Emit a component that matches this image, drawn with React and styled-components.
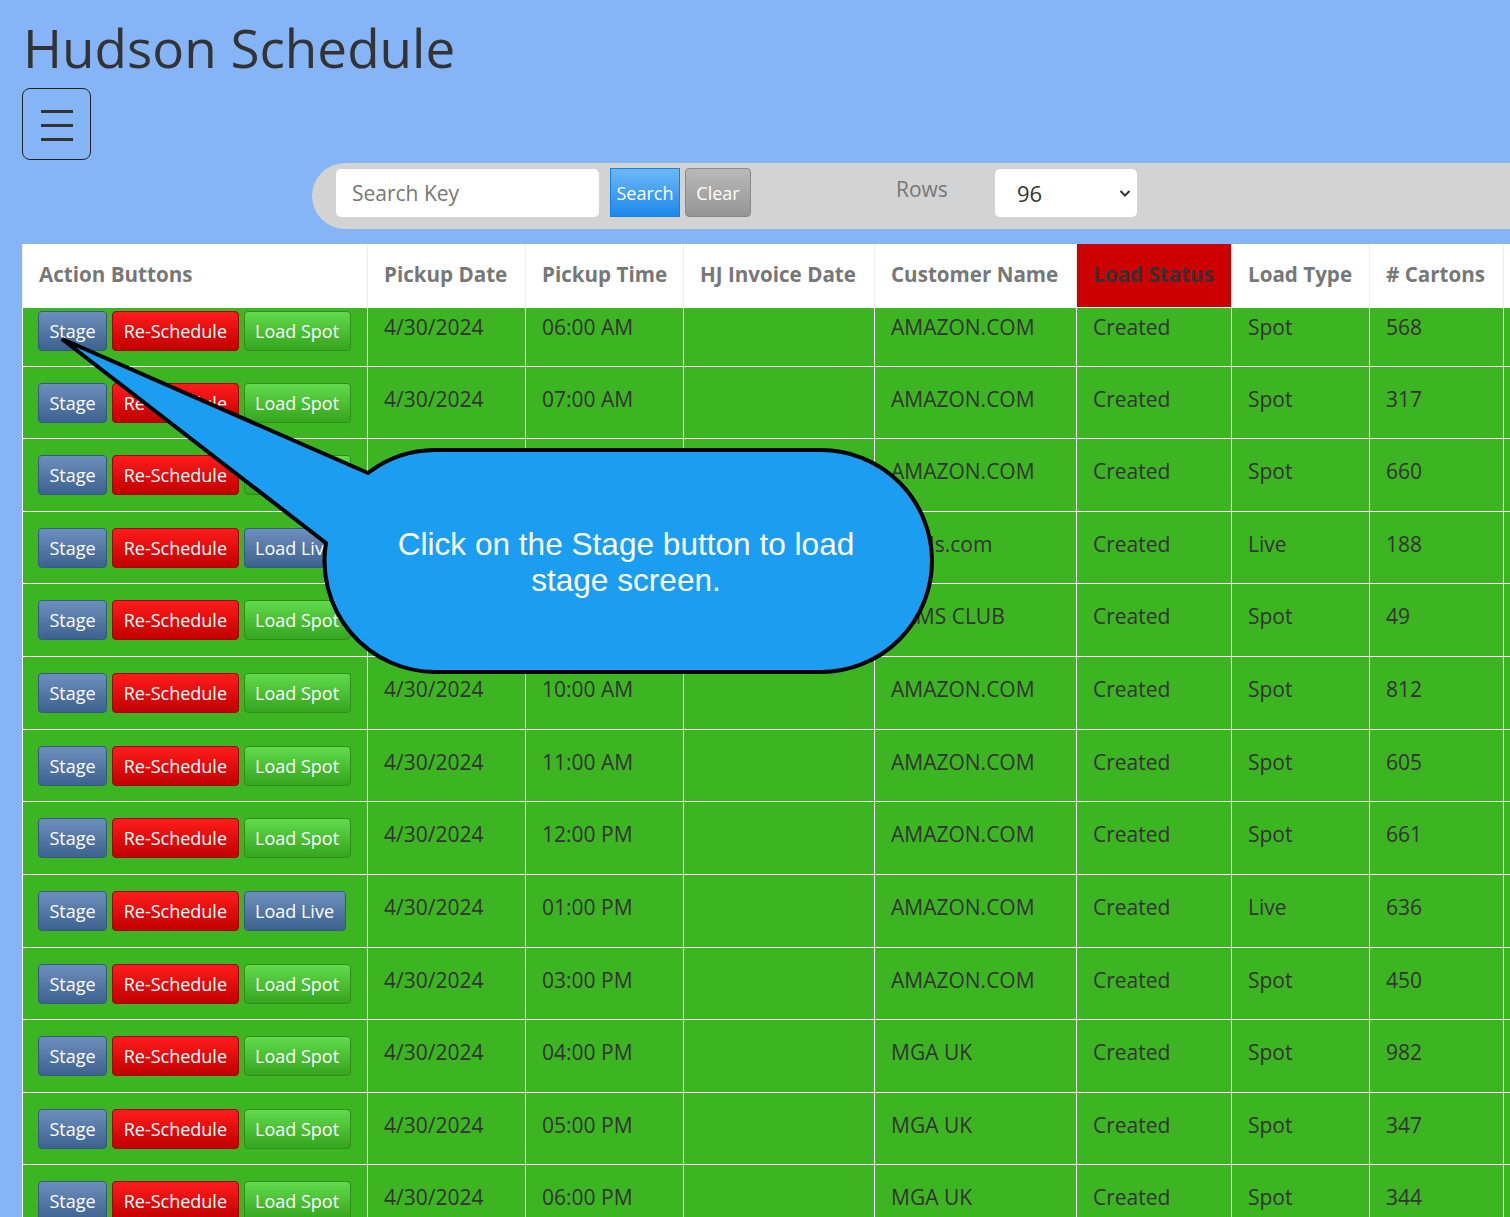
import React from 'react';
import styled, {createGlobalStyle, css} from 'styled-components';

const GlobalStyle = createGlobalStyle`
  html, body {
    margin: 0;
    padding: 0;
    overflow: hidden;
    background: #85b5f6;
  }
  body {
    font-family: "Open Sans", "Liberation Sans", sans-serif;
    color: #333;
  }
  * { box-sizing: border-box; }
`;

const Page = styled.div`
  position: relative;
  width: 1510px;
  height: 1217px;
  overflow: hidden;
  padding-left: 22px;
`;

const Title = styled.h1`
  margin: 17px 0 9px 1px;
  font-size: 53px;
  font-weight: 400;
  line-height: 62px;
  color: #333;
`;

const MenuButton = styled.button`
  display: flex;
  flex-direction: column;
  justify-content: center;
  align-items: center;
  gap: 11px;
  width: 69px;
  height: 72px;
  padding: 3px 0 0;
  background: transparent;
  border: 1px solid #222;
  border-radius: 8px;
`;

const MenuBar = styled.span`
  display: block;
  width: 32px;
  height: 3px;
  background: #333;
`;

const Toolbar = styled.div`
  display: flex;
  align-items: flex-start;
  height: 66px;
  margin: 3px 0 15px 290px;
  padding: 6px 0 0 24px;
  background: #d3d3d3;
  border-radius: 34px 0 0 34px;
`;

const SearchInput = styled.input`
  width: 263px;
  height: 48px;
  padding: 0 16px;
  border: none;
  border-radius: 5px;
  background: #fff;
  font-family: inherit;
  font-size: 21px;
  color: #333;
  outline: none;
  &::placeholder { color: #777; }
`;

const barButtons = {
  search: css`
    width: 70px;
    border-radius: 0;
    background: linear-gradient(#6cb8f7, #1d88ec);
    border-color: #1a7fd9;
  `,
  clear: css`
    width: 66px;
    border-radius: 4px;
    background: linear-gradient(#b9b9b9, #959595);
    border-color: #8a8a8a;
  `,
};

const BarButton = styled.button`
  height: 49px;
  margin: -1px 0 0 ${({$gap}) => $gap}px;
  padding: 0;
  border: 1px solid;
  font-family: inherit;
  font-size: 18px;
  color: #fff;
  ${({$variant}) => barButtons[$variant]}
`;

const RowsLabel = styled.span`
  margin-left: 145px;
  line-height: 40px;
  font-size: 21px;
  color: #777;
`;

const SelectBox = styled.div`
  display: flex;
  align-items: center;
  justify-content: space-between;
  width: 142px;
  height: 48px;
  margin-left: 47px;
  padding: 0 5px 0 22px;
  background: #fff;
  border-radius: 5px;
  font-size: 22px;
  color: #333;
`;

const Table = styled.table`
  border-collapse: collapse;
  table-layout: fixed;
  width: 1632px;
`;

const HeadCell = styled.th`
  height: 63px;
  padding: 0 16px 2px;
  text-align: left;
  vertical-align: middle;
  white-space: nowrap;
  font-size: 20.6px;
  font-weight: 700;
  color: ${({$alert}) => ($alert ? '#333' : '#777')};
  background: ${({$alert}) => ($alert ? '#cc0000' : '#fff')};
  border-left: 1px solid #eee;
`;

const Row = styled.tr`
  height: ${({$first}) => ($first ? '59px' : '72.64px')};
`;

const Cell = styled.td`
  padding: ${({$first}) => ($first ? '4px' : '17px')} 16px 0;
  vertical-align: top;
  white-space: nowrap;
  font-size: 21px;
  line-height: 30px;
  color: #333;
  background: #3db522;
  border: 1px solid #fff;
`;

const ActionCell = styled(Cell)`
  padding: ${({$first}) => ($first ? '3px' : '16px')} 10px 0 15px;
`;

const ButtonGroup = styled.div`
  display: flex;
  gap: 5px;
`;

const actionVariants = {
  blue: css`
    background: linear-gradient(#6d8fbd, #3d6290);
    border-color: #355987;
  `,
  red: css`
    background: linear-gradient(#ff1c1c, #c10000);
    border-color: #a30000;
  `,
  green: css`
    background: linear-gradient(#62da4c, #35a51f);
    border-color: #2e9019;
  `,
};

const ActionButton = styled.button`
  padding: 6px 10.5px;
  border: 1px solid;
  border-radius: 4px;
  font-family: inherit;
  font-size: 18px;
  line-height: 26px;
  color: #fff;
  white-space: nowrap;
  ${({$variant}) => actionVariants[$variant]}
`;

const Overlay = styled.svg`
  position: absolute;
  top: 0;
  left: 0;
  pointer-events: none;
`;

const CalloutText = styled.div`
  position: absolute;
  top: 526px;
  left: 322px;
  width: 608px;
  text-align: center;
  font-family: "Liberation Sans", Arial, sans-serif;
  font-size: 31.6px;
  line-height: 36px;
  color: #fff;
  pointer-events: none;
`;

const columns = [
  {label: 'Action Buttons', width: 345},
  {label: 'Pickup Date', width: 158},
  {label: 'Pickup Time', width: 158},
  {label: 'HJ Invoice Date', width: 191},
  {label: 'Customer Name', width: 202},
  {label: 'Load Status', width: 155, alert: true},
  {label: 'Load Type', width: 138},
  {label: '# Cartons', width: 134},
  {label: '', width: 150},
];

const rows = [
  ['06:00 AM', 'AMAZON.COM', 'Spot', '568'],
  ['07:00 AM', 'AMAZON.COM', 'Spot', '317'],
  ['08:00 AM', 'AMAZON.COM', 'Spot', '660'],
  ['09:00 AM', 'Kohls.com', 'Live', '188'],
  ['09:00 AM', 'SAMS CLUB', 'Spot', '49'],
  ['10:00 AM', 'AMAZON.COM', 'Spot', '812'],
  ['11:00 AM', 'AMAZON.COM', 'Spot', '605'],
  ['12:00 PM', 'AMAZON.COM', 'Spot', '661'],
  ['01:00 PM', 'AMAZON.COM', 'Live', '636'],
  ['03:00 PM', 'AMAZON.COM', 'Spot', '450'],
  ['04:00 PM', 'MGA UK', 'Spot', '982'],
  ['05:00 PM', 'MGA UK', 'Spot', '347'],
  ['06:00 PM', 'MGA UK', 'Spot', '344'],
];

const Chevron = () => (
  <svg width="14" height="14" viewBox="0 0 14 14">
    <path d="M2.5 5 L7 9.5 L11.5 5" fill="none" stroke="#333" strokeWidth="2" />
  </svg>
);

export default function App() {
  return (
    <Page>
      <GlobalStyle />
      <Title>Hudson Schedule</Title>
      <MenuButton aria-label="Menu">
        <MenuBar />
        <MenuBar />
        <MenuBar />
      </MenuButton>
      <Toolbar>
        <SearchInput placeholder="Search Key" />
        <BarButton $variant="search" $gap={11}>Search</BarButton>
        <BarButton $variant="clear" $gap={5}>Clear</BarButton>
        <RowsLabel>Rows</RowsLabel>
        <SelectBox>
          96
          <Chevron />
        </SelectBox>
      </Toolbar>
      <Table>
        <colgroup>
          {columns.map((c, i) => (
            <col key={i} style={{width: c.width}} />
          ))}
        </colgroup>
        <thead>
          <tr>
            {columns.map((c, i) => (
              <HeadCell key={i} $alert={c.alert}>{c.label}</HeadCell>
            ))}
          </tr>
        </thead>
        <tbody>
          {rows.map(([time, customer, type, cartons], i) => {
            const first = i === 0;
            return (
              <Row key={i} $first={first}>
                <ActionCell $first={first}>
                  <ButtonGroup>
                    <ActionButton $variant="blue">Stage</ActionButton>
                    <ActionButton $variant="red">Re-Schedule</ActionButton>
                    <ActionButton $variant={type === 'Live' ? 'blue' : 'green'}>
                      Load {type}
                    </ActionButton>
                  </ButtonGroup>
                </ActionCell>
                <Cell $first={first}>4/30/2024</Cell>
                <Cell $first={first}>{time}</Cell>
                <Cell $first={first} />
                <Cell $first={first}>{customer}</Cell>
                <Cell $first={first}>Created</Cell>
                <Cell $first={first}>{type}</Cell>
                <Cell $first={first}>{cartons}</Cell>
                <Cell $first={first} />
              </Row>
            );
          })}
        </tbody>
      </Table>
      <Overlay width="1000" height="700" viewBox="0 0 1000 700">
        <path
          d="M368 473 L62 339 L326 543 A111 111 0 0 0 435 672 L821 672 A111 111 0 0 0 821 450 L435 450 A111 111 0 0 0 368 473 Z"
          fill="#1b9df2"
          stroke="#000"
          strokeWidth="4"
          strokeLinejoin="miter"
        />
      </Overlay>
      <CalloutText>
        Click on the Stage button to load
        <br />
        stage screen.
      </CalloutText>
    </Page>
  );
}
